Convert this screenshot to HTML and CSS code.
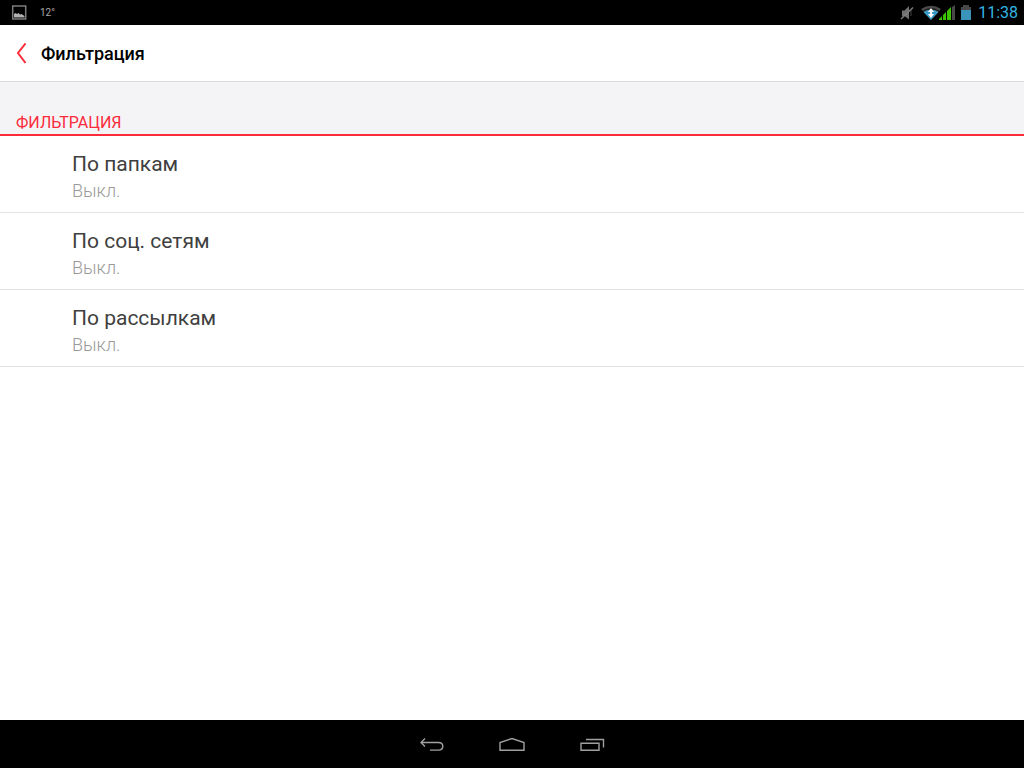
FILE: index.html
```html
<!DOCTYPE html>
<html lang="ru">
<head>
    <meta charset="UTF-8">
    <meta name="viewport" content="width=device-width, initial-scale=1.0">
    <title>Фильтрация</title>
    <link rel="stylesheet" href="styles.css">
</head>
<body>

    <!-- System status bar -->
    <div class="status-bar">
        <div class="status-left">
            <svg class="icon-picture" width="16" height="16" viewBox="0 0 16 16">
                <rect x="1.700" y="1" width="13" height="13" fill="none" stroke="#7c7c7c" stroke-width="1.500"/>
                <path d="M3 12.500V9l1.500-1L6 9l1.500-1L9 9.500l1.500-.5 3 2v1.500z" fill="#b0b0b0"/>
            </svg>
            <span class="temperature">12°</span>
        </div>
        <div class="status-right">
            <svg class="icon-mute" width="14" height="16" viewBox="0 0 14 16">
                <path d="M2 5.500h2.500L9 1v13.500L4.500 11H2z" fill="#707070"/>
                <path d="M11 5v6" stroke="#444" fill="none"/>
                <path d="M1 14L13 2.500" stroke="#808080" stroke-width="1.400"/>
            </svg>
            <svg class="icon-wifi" width="20" height="16" viewBox="0 0 20 16">
                <path d="M0 4Q10-2.500 20 4L10 15z" fill="#4a4a4a"/>
                <path d="M2.500 7Q10 2.500 17.500 7L10 15z" fill="#3a9cc4"/>
                <path d="M2 6.300Q10 .8 18 6.300" fill="none" stroke="#000" stroke-width=".8"/>
                <path d="M10 3l3 4H7zM10 13L7 9h6z" fill="#fff"/>
                <path d="M9 6.500h2v3H9z" fill="#fff"/>
            </svg>
            <svg class="icon-signal" width="16" height="16" viewBox="0 0 16 16">
                <path d="M0 15v-1l3-3v4zM4 15v-5l3-3v8zM8 15V6l4-4v13z" fill="#3cc400"/>
                <path d="M13 15V2l3-2v15z" fill="#484848"/>
            </svg>
            <svg class="icon-battery" width="10" height="16" viewBox="0 0 10 16">
                <path d="M2 0h6v2h2v3H0V2h2z" fill="#484848"/>
                <path d="M0 5h10v10H0z" fill="#3a93b8"/>
            </svg>
            <time class="clock">11:38</time>
        </div>
    </div>

    <header class="header">
        <button class="back" type="button" aria-label="Назад">
            <svg width="12" height="22" viewBox="0 0 12 22">
                <path d="M9.500 .5L2 10l7.500 10" fill="none" stroke="#fb2b3a" stroke-width="2"/>
            </svg>
        </button>
        <h1>Фильтрация</h1>
    </header>

    <main class="content">
        <h2 class="section-title">Фильтрация</h2>
        <ul class="settings">
            <li>
                <button class="setting" type="button">
                    <span class="setting-name">По папкам</span>
                    <span class="setting-value">Выкл.</span>
                </button>
            </li>
            <li>
                <button class="setting" type="button">
                    <span class="setting-name">По соц. сетям</span>
                    <span class="setting-value">Выкл.</span>
                </button>
            </li>
            <li>
                <button class="setting" type="button">
                    <span class="setting-name">По рассылкам</span>
                    <span class="setting-value">Выкл.</span>
                </button>
            </li>
        </ul>
    </main>

    <!-- System navigation -->
    <nav class="nav-bar">
        <button type="button" aria-label="Назад">
            <svg width="26" height="16" viewBox="0 0 26 16">
                <path d="M6 2.500L2 6.500l4 4M2 6.500h17.500q4.300 0 4.300 3.800t-4.300 3.800H11" fill="none" stroke="#a0a0a0" stroke-width="1.400"/>
            </svg>
        </button>
        <button type="button" aria-label="Домой">
            <svg width="26" height="16" viewBox="0 0 26 16">
                <path d="M1 14.300V6.500l12-4 12 4v7.800z" fill="none" stroke="#a0a0a0" stroke-width="1.400"/>
            </svg>
        </button>
        <button type="button" aria-label="Недавние">
            <svg width="26" height="16" viewBox="0 0 26 16">
                <path d="M2 7.300h18v7H2zM7 3.500h17.500V11.500" fill="none" stroke="#a0a0a0" stroke-width="1.400"/>
            </svg>
        </button>
    </nav>

</body>
</html>
```
FILE: styles.css
```css
* {
    margin: 0;
    padding: 0;
    box-sizing: border-box;
}

body {
    font-family: Roboto, 'Liberation Sans', sans-serif;
    background-color: #fff;
    color: #000;
    display: flex;
    flex-direction: column;
    min-height: 100vh;
}

button {
    background: none;
    border: none;
    font-family: inherit;
    cursor: pointer;
}

svg {
    display: block;
}

/* Status bar */
.status-bar {
    display: flex;
    justify-content: space-between;
    align-items: center;
    height: 25px;
    padding: 0 6px 0 11px;
    background-color: #000;
}

.status-left,
.status-right {
    display: flex;
    align-items: center;
}

.status-left {
    gap: 13px;
}

.temperature {
    color: #aaa;
    font-size: 10px;
    line-height: 16px;
}

.icon-wifi {
    margin-left: 7px;
}

.icon-signal {
    margin-left: -2px;
}

.icon-battery {
    margin: 0 7px 0 6px;
}

.clock {
    color: #33b5e5;
    font-size: 16px;
    line-height: 24px;
}

/* Header */
.header {
    display: flex;
    align-items: center;
    gap: 13px;
    height: 57px;
    padding: 2px 16px 0;
    border-bottom: 1px solid #d9d9db;
}

.header h1 {
    font-size: 18px;
    font-weight: 500;
    line-height: 24px;
}

/* Settings list */
.content {
    flex: 1;
}

.section-title {
    padding: 31px 16px 1px;
    background-color: #f4f4f7;
    border-bottom: 2px solid #fb2b3a;
    color: #fb2b3a;
    font-size: 16px;
    font-weight: 400;
    line-height: 20px;
    text-transform: uppercase;
}

.settings {
    list-style: none;
}

.settings li {
    border-bottom: 1px solid #e2e2e2;
}

.setting {
    display: block;
    width: 100%;
    padding: 14px 16px 8px 72px;
    text-align: left;
}

.setting-name,
.setting-value {
    display: block;
}

.setting-name {
    color: #404040;
    font-size: 21px;
    line-height: 28px;
}

.setting-value {
    color: #999;
    font-size: 18px;
    font-weight: 300;
    line-height: 26px;
}

/* Navigation bar */
.nav-bar {
    display: flex;
    justify-content: center;
    align-items: center;
    gap: 54px;
    height: 48px;
    background-color: #000;
}
```
